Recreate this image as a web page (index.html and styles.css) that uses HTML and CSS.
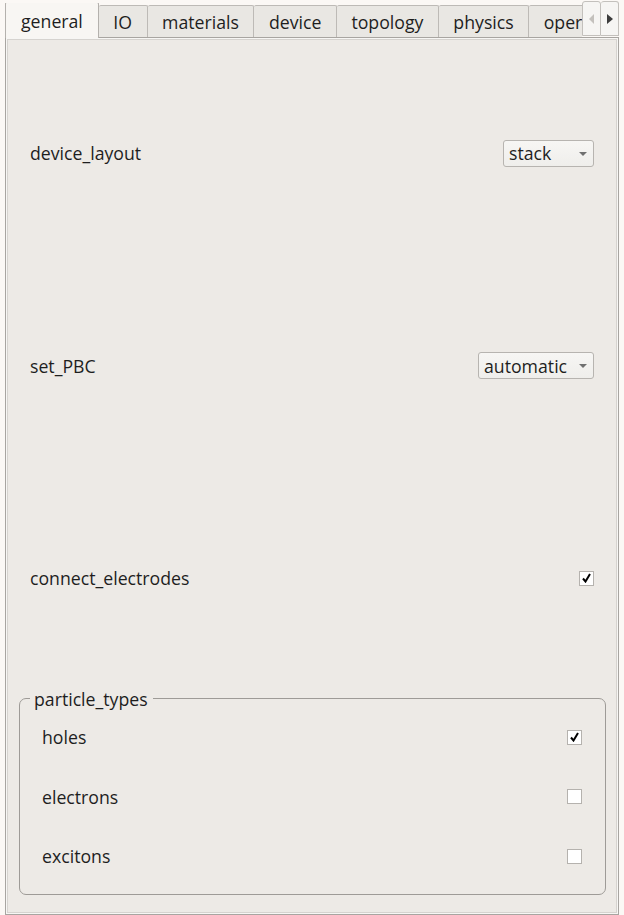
FILE: index.html
```html
<!DOCTYPE html>
<html lang="en">
<head>
  <meta charset="UTF-8">
  <title>general</title>
  <link rel="stylesheet" href="styles.css">
</head>
<body>
  <div class="window">
    <div class="tabbar">
      <div class="tabs">
        <div class="tab active">general</div>
        <div class="tab">IO</div>
        <div class="tab">materials</div>
        <div class="tab">device</div>
        <div class="tab">topology</div>
        <div class="tab">physics</div>
        <div class="tab">operation</div>
      </div>
      <div class="scroll-btn">
        <svg width="6" height="10" viewBox="0 0 6 10"><path d="M5 0 L0 5 L5 10 Z" fill="#c4c1bd"/></svg>
      </div>
      <div class="scroll-btn">
        <svg width="6" height="10" viewBox="0 0 6 10"><path d="M0 0 L6 5 L0 10 Z" fill="#3c3c3c"/></svg>
      </div>
    </div>

    <div class="panel">
      <div class="row">
        <span class="label">device_layout</span>
        <div class="combo combo-stack">stack<span class="arrow"></span></div>
      </div>
      <div class="row">
        <span class="label">set_PBC</span>
        <div class="combo combo-auto">automatic<span class="arrow"></span></div>
      </div>
      <div class="row">
        <span class="label">connect_electrodes</span>
        <span class="checkbox checked"></span>
      </div>

      <fieldset class="group">
        <legend>particle_types</legend>
        <div class="group-row">
          <span class="label">holes</span>
          <span class="checkbox checked"></span>
        </div>
        <div class="group-row">
          <span class="label">electrons</span>
          <span class="checkbox"></span>
        </div>
        <div class="group-row">
          <span class="label">excitons</span>
          <span class="checkbox"></span>
        </div>
      </fieldset>
    </div>
  </div>
</body>
</html>
```

FILE: styles.css
```css
body {
  margin: 0;
  background-color: #fbf8f5;
  font-family: "Open Sans", "DejaVu Sans", sans-serif;
  font-size: 17.7px;
  color: #1e1e1e;
}

.window {
  width: 614px;
  padding: 3px 5px 0 5px;
}

.tabbar {
  display: flex;
  align-items: flex-end;
  height: 34px;
}

.tabs {
  flex: 1;
  display: flex;
  align-items: flex-end;
  overflow: hidden;
  height: 35px;
  margin-bottom: -1px;
  position: relative;
  z-index: 1;
}

.tab {
  flex-shrink: 0;
  height: 31px;
  margin-bottom: 1px;
  padding: 0 14.5px;
  display: flex;
  align-items: center;
  background-color: #e9e7e3;
  border: 1px solid #bdbab6;
  border-bottom: none;
  border-left: none;
  border-radius: 2px 2px 0 0;
  white-space: nowrap;
}

.tab.active {
  height: 35px;
  margin-bottom: 0;
  padding: 0 15px;
  background-color: #f8f6f3;
  border-left: 1px solid #bdbab6;
  border-color: #b4b1ad;
}

.scroll-btn {
  width: 17px;
  height: 33px;
  margin-bottom: 1px;
  display: flex;
  align-items: center;
  justify-content: center;
  background-color: #f6f5f3;
  border: 1px solid #c3c0bc;
  border-radius: 3px 3px 0 0;
}

.scroll-btn + .scroll-btn {
  border-left: none;
}

.panel {
  height: 867px;
  border: 1px solid #a8a5a1;
  box-shadow: inset 0 0 0 1px #f7f6f4, inset 0 0 0 2px #d6d3cf;
  background-color: #edeae6;
  padding: 9px 24px 0 24px;
}

.row {
  height: 212.5px;
  display: flex;
  align-items: center;
  justify-content: space-between;
}

.combo {
  height: 25px;
  display: flex;
  align-items: center;
  justify-content: space-between;
  padding: 0 6px 0 5px;
  border: 1px solid #b7b4b0;
  border-radius: 3px;
  background: linear-gradient(#f7f6f4, #efeeeb);
}

.combo-stack {
  width: 78px;
}

.combo-auto {
  width: 103px;
}

.arrow {
  width: 0;
  height: 0;
  border-left: 4px solid transparent;
  border-right: 4px solid transparent;
  border-top: 4px solid #707070;
  margin-top: 1px;
}

.checkbox {
  width: 13px;
  height: 13px;
  border: 1px solid #b5b2ae;
  background-color: #ffffff;
  position: relative;
}

.checkbox.checked::after {
  content: "";
  position: absolute;
  left: 2px;
  top: 1px;
  width: 9px;
  height: 10px;
  background: no-repeat center / contain url("data:image/svg+xml;utf8,<svg xmlns='http://www.w3.org/2000/svg' viewBox='0 0 9 10'><path d='M1 5.5 L3.5 8.5 L8 1' fill='none' stroke='black' stroke-width='2'/></svg>");
}

.group {
  margin: 2px -12px 0 -11px;
  height: 208px;
  border: 1px solid #9e9b97;
  border-radius: 7px;
  padding: 6px 23px 0 22px;
  box-sizing: border-box;
}

.group legend {
  padding: 0 5px 0 4px;
  margin-left: -12px;
}

.group-row {
  height: 59.5px;
  display: flex;
  align-items: center;
  justify-content: space-between;
  margin-top: -9px;
  margin-bottom: 9px;
}
```
